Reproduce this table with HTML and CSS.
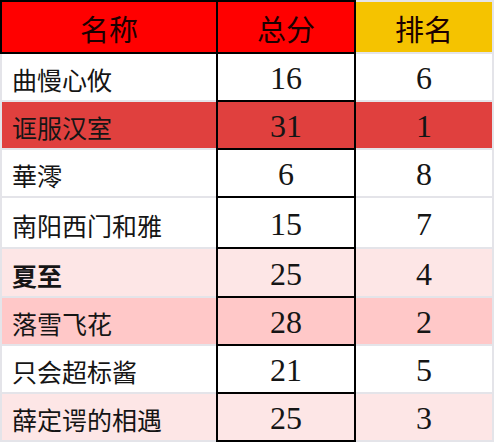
FILE: index.html
```html
<!DOCTYPE html>
<html lang="zh">
<head>
<meta charset="utf-8">
<title>排名</title>
<link rel="stylesheet" href="styles.css">
</head>
<body>
<div class="board">
  <div class="cell head head-red name-head">名称</div>
  <div class="cell head head-red score">总分</div>
  <div class="cell head head-yellow">排名</div>

  <div class="cell name">曲慢心攸</div>
  <div class="cell num score">16</div>
  <div class="cell num">6</div>

  <div class="cell name row-red">诓服汉室</div>
  <div class="cell num score row-red">31</div>
  <div class="cell num row-red">1</div>

  <div class="cell name">華澪</div>
  <div class="cell num score">6</div>
  <div class="cell num">8</div>

  <div class="cell name">南阳西门和雅</div>
  <div class="cell num score">15</div>
  <div class="cell num">7</div>

  <div class="cell name row-light bold">夏至</div>
  <div class="cell num score row-light">25</div>
  <div class="cell num row-light">4</div>

  <div class="cell name row-pink">落雪飞花</div>
  <div class="cell num score row-pink">28</div>
  <div class="cell num row-pink">2</div>

  <div class="cell name">只会超标酱</div>
  <div class="cell num score">21</div>
  <div class="cell num">5</div>

  <div class="cell name row-light">薛定谔的相遇</div>
  <div class="cell num score row-light">25</div>
  <div class="cell num row-light">3</div>
</div>
</body>
</html>
```

FILE: styles.css
```css
html, body {
  margin: 0;
  padding: 0;
  background: #e4e4e9;
}

.board {
  width: 494px;
  height: 442px;
  box-sizing: border-box;
  padding: 2px;
  display: grid;
  grid-template-columns: 214px 136px 136px;
  grid-template-rows: 50px 46px 46px 46px 49px 47px 46px 46px 46px;
  gap: 2px;
  background: #e4e4e9;
  font-family: "Noto Sans CJK SC", "Noto Sans", sans-serif;
  color: #151515;
}

.cell {
  background: #ffffff;
  display: flex;
  align-items: center;
  overflow: hidden;
}

.head {
  justify-content: center;
  font-size: 29px;
  color: #1c0000;
  padding-top: 1px;
}

.head-red {
  background: #ff0000;
}

.head-yellow {
  background: #f5c300;
}

.name-head,
.score {
  outline: 2px solid #000;
}

.name {
  font-size: 25px;
  padding-left: 10px;
  padding-top: 4px;
  box-sizing: border-box;
}

.bold {
  font-weight: 700;
}

.num {
  justify-content: center;
  font-family: "Liberation Serif", "Times New Roman", serif;
  font-size: 32px;
  padding-top: 3px;
  box-sizing: border-box;
}

.row-red {
  background: #e0403e;
}

.row-light {
  background: #fde6e6;
}

.row-pink {
  background: #ffc8c8;
}
```
